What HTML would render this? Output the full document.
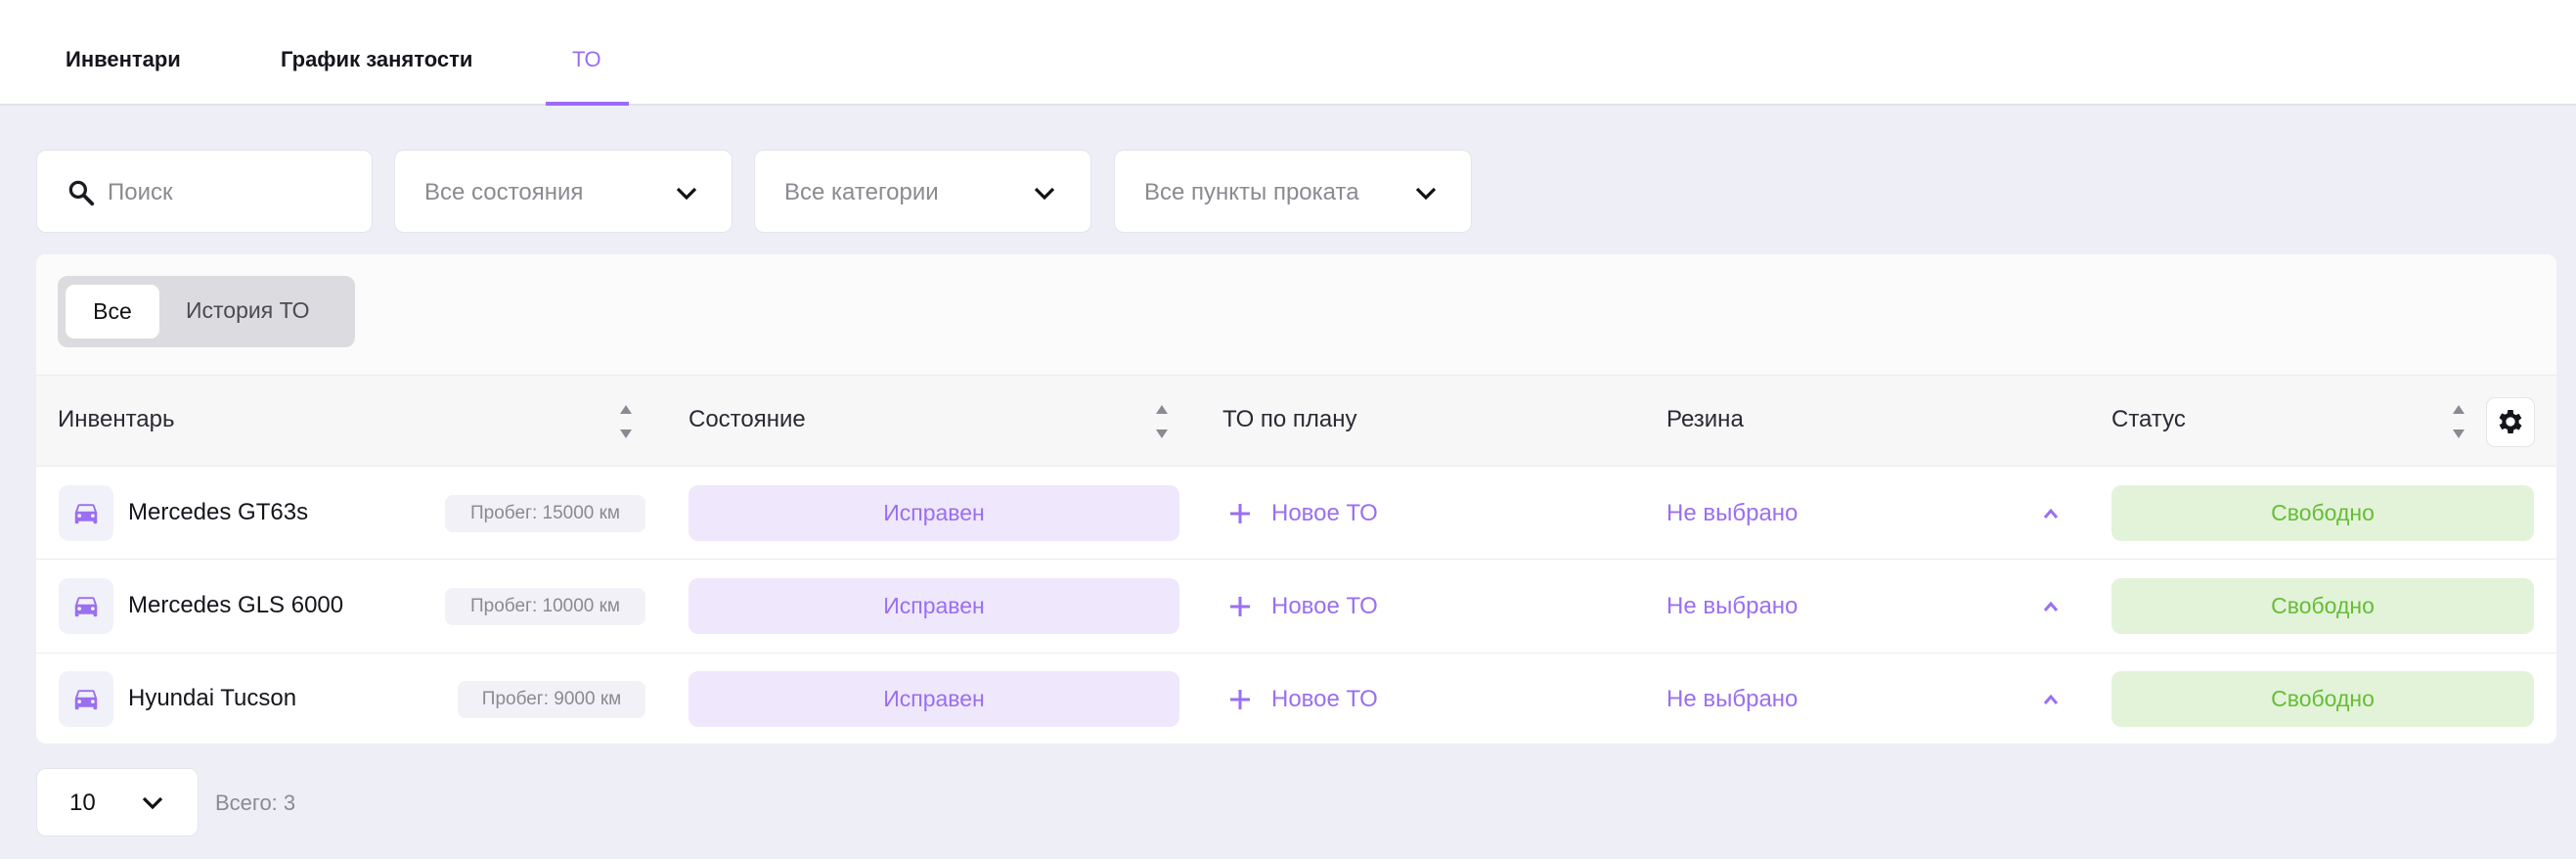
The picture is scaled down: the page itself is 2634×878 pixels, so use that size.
<!DOCTYPE html>
<html><head><meta charset="utf-8"><style>
*{box-sizing:border-box;margin:0;padding:0}
body{width:2634px;height:878px;background:#eeeef7;font-family:"Liberation Sans",sans-serif;position:relative;overflow:hidden;color:#1b1b22}
.a{position:absolute}
.hdr{left:0;top:0;width:2634px;height:108px;background:#fff;border-bottom:2px solid #e2e2e8}
.tab{top:48px;font-size:22px;font-weight:bold;color:#15151c}
.box{background:#fff;border:1px solid #e4e4ec;border-radius:10px;height:85px;top:153px}
.ph{font-size:24px;color:#8a8a90;top:29px}
.chev{top:33px}
.card{left:37px;top:260px;width:2577px;height:500px;background:#fff;border-radius:10px;overflow:hidden}
.th{font-size:24px;color:#2a2a33;top:415px}
.row{left:37px;width:2577px;height:1px;background:#ececf0}
.ico{width:56px;height:57px;background:#f1f1fa;border-radius:10px;left:60px}
.nm{left:131px;font-size:24px;color:#15151c}
.km{background:#f1f1f7;border-radius:8px;height:38px;font-size:19px;color:#8a8a90;text-align:center;line-height:38px}
.ok{left:704px;width:502px;height:57px;background:#efe7fb;border-radius:10px;color:#9a6ff0;font-size:23px;text-align:center;line-height:57px}
.st{left:2159px;width:432px;height:57px;background:#e2f3d9;border-radius:10px;color:#67bd36;font-size:23px;text-align:center;line-height:57px}
.pur{color:#9a6ff0;font-size:24px}
</style></head><body>
<div class="a hdr"></div>
<div class="a tab" style="left:67px">Инвентари</div>
<div class="a tab" style="left:287px">График занятости</div>
<div class="a tab" style="left:585px;color:#9b6cf5;font-weight:normal">ТО</div>
<div class="a" style="left:558px;top:104px;width:85px;height:4px;background:#9b6cf5"></div>

<div class="a box" style="left:37px;width:344px">
 <svg class="a" style="left:30px;top:28px" width="30" height="30" viewBox="0 0 24 24"><circle cx="9.5" cy="9.5" r="6" fill="none" stroke="#1b1b22" stroke-width="2.6"/><path d="M14 14l7 7" stroke="#1b1b22" stroke-width="3" stroke-linecap="round"/></svg>
 <div class="a ph" style="left:72px">Поиск</div></div>
<div class="a box" style="left:403px;width:346px"><div class="a ph" style="left:30px">Все состояния</div>
 <svg class="a chev" style="left:286px" width="24" height="20" viewBox="0 0 24 20"><path d="M3 6l9 9 9-9" fill="none" stroke="#111" stroke-width="3.2"/></svg></div>
<div class="a box" style="left:771px;width:345px"><div class="a ph" style="left:30px">Все категории</div>
 <svg class="a chev" style="left:284px" width="24" height="20" viewBox="0 0 24 20"><path d="M3 6l9 9 9-9" fill="none" stroke="#111" stroke-width="3.2"/></svg></div>
<div class="a box" style="left:1139px;width:366px"><div class="a ph" style="left:30px">Все пункты проката</div>
 <svg class="a chev" style="left:306px" width="24" height="20" viewBox="0 0 24 20"><path d="M3 6l9 9 9-9" fill="none" stroke="#111" stroke-width="3.2"/></svg></div>

<div class="a card">
 <div class="a" style="left:0;top:0;width:2577px;height:123px;background:#fbfbfb"></div>
 <div class="a" style="left:0;top:123px;width:2577px;height:94px;background:#f7f7f8;border-top:1px solid #ececf0;border-bottom:1px solid #ececf0"></div>
</div>
<div class="a" style="left:59px;top:282px;width:304px;height:73px;background:#dcdce0;border-radius:10px"></div>
<div class="a" style="left:67px;top:291px;width:96px;height:55px;background:#fff;border-radius:9px;font-size:23px;text-align:center;line-height:55px;color:#111">Все</div>
<div class="a" style="left:190px;top:304px;font-size:23px;color:#4a4a52">История ТО</div>

<div class="a th" style="left:59px">Инвентарь</div>
<div class="a th" style="left:704px">Состояние</div>
<div class="a th" style="left:1250px">ТО по плану</div>
<div class="a th" style="left:1704px">Резина</div>
<div class="a th" style="left:2159px">Статус</div>
<svg class="a" style="left:633px;top:413px" width="14" height="36" viewBox="0 0 14 36"><path d="M7 1l6 9H1z M7 35l6-9H1z" fill="#8a8a92"/></svg>
<svg class="a" style="left:1181px;top:413px" width="14" height="36" viewBox="0 0 14 36"><path d="M7 1l6 9H1z M7 35l6-9H1z" fill="#8a8a92"/></svg>
<svg class="a" style="left:2507px;top:413px" width="14" height="36" viewBox="0 0 14 36"><path d="M7 1l6 9H1z M7 35l6-9H1z" fill="#8a8a92"/></svg>
<div class="a" style="left:2542px;top:406px;width:50px;height:51px;background:#fff;border:1px solid #e4e4ea;border-radius:9px"></div>
<svg class="a" style="left:2551px;top:415px" width="32" height="32" viewBox="0 0 24 24"><path fill="#15151c" d="M19.4 13a7.6 7.6 0 000-2l2.1-1.6-2-3.5-2.5 1a7 7 0 00-1.7-1L15 3h-4l-.4 2.6a7 7 0 00-1.7 1l-2.5-1-2 3.5L6.6 11a7.6 7.6 0 000 2l-2.1 1.6 2 3.5 2.5-1a7 7 0 001.7 1L11 21h4l.4-2.6a7 7 0 001.7-1l2.5 1 2-3.5zM13 15.5a3.5 3.5 0 110-7 3.5 3.5 0 010 7z" transform="translate(-1 0)"/></svg>

<div class="a row" style="top:571px"></div>
<div class="a row" style="top:667px"></div>

<div class="a ico" style="top:496px"></div><div class="a ico" style="top:591px"></div><div class="a ico" style="top:686px"></div>
<svg class="a" style="left:73px;top:509px" width="30" height="30" viewBox="0 0 24 24"><path fill="#9a6ff0" d="M18.9 6c-.2-.6-.8-1-1.4-1h-11c-.7 0-1.2.4-1.4 1L3 12v8c0 .6.4 1 1 1h1c.6 0 1-.4 1-1v-1h12v1c0 .6.4 1 1 1h1c.6 0 1-.4 1-1v-8l-2.1-6zM6.5 16a1.5 1.5 0 110-3 1.5 1.5 0 010 3zm11 0a1.5 1.5 0 110-3 1.5 1.5 0 010 3zM5 11l1.5-4.5h11L19 11H5z"/></svg>
<svg class="a" style="left:73px;top:604px" width="30" height="30" viewBox="0 0 24 24"><path fill="#9a6ff0" d="M18.9 6c-.2-.6-.8-1-1.4-1h-11c-.7 0-1.2.4-1.4 1L3 12v8c0 .6.4 1 1 1h1c.6 0 1-.4 1-1v-1h12v1c0 .6.4 1 1 1h1c.6 0 1-.4 1-1v-8l-2.1-6zM6.5 16a1.5 1.5 0 110-3 1.5 1.5 0 010 3zm11 0a1.5 1.5 0 110-3 1.5 1.5 0 010 3zM5 11l1.5-4.5h11L19 11H5z"/></svg>
<svg class="a" style="left:73px;top:699px" width="30" height="30" viewBox="0 0 24 24"><path fill="#9a6ff0" d="M18.9 6c-.2-.6-.8-1-1.4-1h-11c-.7 0-1.2.4-1.4 1L3 12v8c0 .6.4 1 1 1h1c.6 0 1-.4 1-1v-1h12v1c0 .6.4 1 1 1h1c.6 0 1-.4 1-1v-8l-2.1-6zM6.5 16a1.5 1.5 0 110-3 1.5 1.5 0 010 3zm11 0a1.5 1.5 0 110-3 1.5 1.5 0 010 3zM5 11l1.5-4.5h11L19 11H5z"/></svg>
<div class="a nm" style="top:510px">Mercedes GT63s</div>
<div class="a nm" style="top:605px">Mercedes GLS 6000</div>
<div class="a nm" style="top:700px">Hyundai Tucson</div>
<div class="a km" style="left:455px;top:506px;width:205px">Пробег: 15000 км</div>
<div class="a km" style="left:455px;top:601px;width:205px">Пробег: 10000 км</div>
<div class="a km" style="left:468px;top:696px;width:192px">Пробег: 9000 км</div>
<div class="a ok" style="top:496px">Исправен</div>
<div class="a ok" style="top:591px">Исправен</div>
<div class="a ok" style="top:686px">Исправен</div>
<svg class="a" style="left:1256px;top:513px" width="24" height="24" viewBox="0 0 24 24"><path d="M12 2v20M2 12h20" stroke="#9a6ff0" stroke-width="3"/></svg>
<svg class="a" style="left:1256px;top:608px" width="24" height="24" viewBox="0 0 24 24"><path d="M12 2v20M2 12h20" stroke="#9a6ff0" stroke-width="3"/></svg>
<svg class="a" style="left:1256px;top:703px" width="24" height="24" viewBox="0 0 24 24"><path d="M12 2v20M2 12h20" stroke="#9a6ff0" stroke-width="3"/></svg>
<div class="a pur" style="left:1300px;top:511px">Новое ТО</div>
<div class="a pur" style="left:1300px;top:606px">Новое ТО</div>
<div class="a pur" style="left:1300px;top:701px">Новое ТО</div>
<div class="a pur" style="left:1704px;top:511px">Не выбрано</div>
<div class="a pur" style="left:1704px;top:606px">Не выбрано</div>
<div class="a pur" style="left:1704px;top:701px">Не выбрано</div>
<svg class="a" style="left:2088px;top:518px" width="18" height="14" viewBox="0 0 18 14"><path d="M3 11l6-7 6 7" fill="none" stroke="#9a6ff0" stroke-width="3"/></svg>
<svg class="a" style="left:2088px;top:613px" width="18" height="14" viewBox="0 0 18 14"><path d="M3 11l6-7 6 7" fill="none" stroke="#9a6ff0" stroke-width="3"/></svg>
<svg class="a" style="left:2088px;top:708px" width="18" height="14" viewBox="0 0 18 14"><path d="M3 11l6-7 6 7" fill="none" stroke="#9a6ff0" stroke-width="3"/></svg>
<div class="a st" style="top:496px">Свободно</div>
<div class="a st" style="top:591px">Свободно</div>
<div class="a st" style="top:686px">Свободно</div>

<div class="a" style="left:37px;top:785px;width:166px;height:70px;background:#fff;border:1px solid #e4e4ec;border-radius:10px"></div>
<div class="a" style="left:71px;top:807px;font-size:24px;color:#111">10</div>
<svg class="a" style="left:144px;top:810px" width="24" height="20" viewBox="0 0 24 20"><path d="M3 6l9 9 9-9" fill="none" stroke="#111" stroke-width="3.2"/></svg>
<div class="a" style="left:220px;top:808px;font-size:22px;color:#8a8a90">Всего: 3</div>
</body></html>
